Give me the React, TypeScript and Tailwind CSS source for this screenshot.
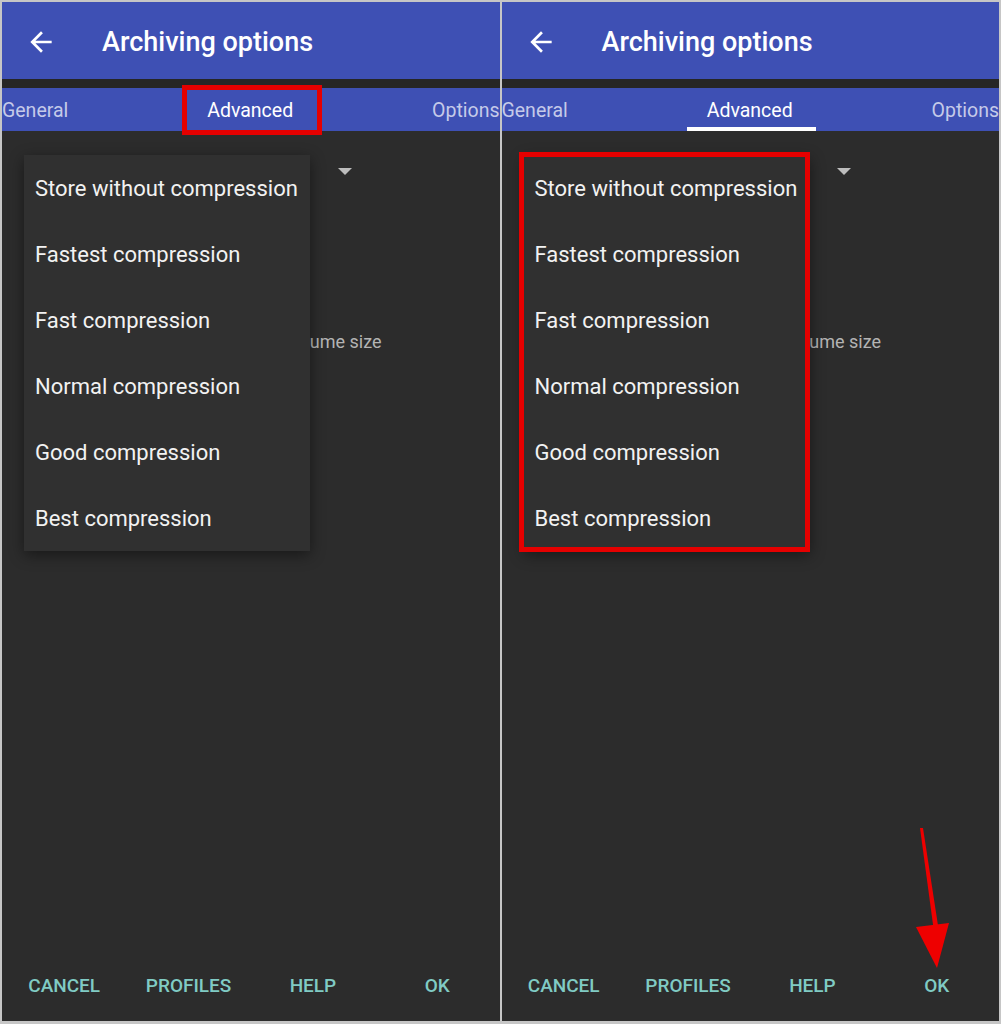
import React from 'react';

const levels = [
  'Store without compression',
  'Fastest compression',
  'Fast compression',
  'Normal compression',
  'Good compression',
  'Best compression',
];

const font = { fontFamily: 'Roboto, "Noto Sans", sans-serif' };

function BackArrow() {
  return (
    <svg width="32" height="32" viewBox="0 0 24 24" fill="#ffffff">
      <path d="M20 11H7.83l5.59-5.59L12 4l-8 8 8 8 1.41-1.41L7.83 13H20v-2z" />
    </svg>
  );
}

function Panel({ marked }: { marked: boolean }) {
  return (
    <div className="relative flex-1 flex flex-col bg-[#2c2c2c] overflow-hidden">
      {/* App bar */}
      <div className="h-[77px] bg-[#3e50b4] flex items-center pt-[3px]">
        <div className="ml-[23px]">
          <BackArrow />
        </div>
        <h1 className="ml-[45px] text-white text-[27px] font-medium">Archiving options</h1>
      </div>
      <div className="h-[9px] bg-[#262626]" />

      {/* Tabs */}
      <div className="h-[43px] bg-[#3e50b4] flex items-center justify-between relative pt-[3px]">
        <span className="text-[19.5px] text-[#c5cae9]">General</span>
        <span className="text-[19.5px] text-white">Advanced</span>
        <span className="text-[19.5px] text-[#c5cae9]">Options</span>
        {marked && <div className="absolute bottom-0 left-[185px] w-[129px] h-[4px] bg-white" />}
      </div>

      {/* Content under the menu */}
      <div className="flex-1 relative">
        <div className="flex justify-end pr-[148px] pt-[37px]">
          <div className="w-0 h-0 border-l-[7px] border-r-[7px] border-t-[7px] border-l-transparent border-r-transparent border-t-[#bdbdbd]" />
        </div>
        <div className="flex justify-end pr-[118px] mt-[153px]">
          <span className="text-[18px] text-[#b4b4b4]">Volume size</span>
        </div>

        {/* Dropdown menu */}
        <div className="absolute left-[22px] top-[24px] w-[286px] bg-[#303030] shadow-[0_4px_14px_rgba(0,0,0,0.45)]">
          {levels.map((l) => (
            <div key={l} className="h-[66px] flex items-center pl-[11px] text-[22px] text-[#f2f2f2] whitespace-nowrap">
              {l}
            </div>
          ))}
        </div>
      </div>

      {/* Bottom buttons */}
      <div className="h-[74px] grid grid-cols-4 items-start">
        {['CANCEL', 'PROFILES', 'HELP', 'OK'].map((b) => (
          <span key={b} className="text-center text-[19px] font-medium text-[#80cbc4] mt-[25px]">
            {b}
          </span>
        ))}
      </div>

      {/* Annotations */}
      {!marked && (
        <div className="absolute left-[180px] top-[83px] w-[140px] h-[50px] border-[5px] border-[#e50000]" />
      )}
      {marked && (
        <>
          <div className="absolute left-[17px] top-[150px] w-[291px] h-[400px] border-[5px] border-[#e50000]" />
          <svg className="absolute left-[400px] top-[820px]" width="60" height="160" viewBox="0 0 60 160">
            <polygon points="18,6 21,6 37,110 32,110" fill="#ee0000" />
            <polygon points="14,105 47,101 35,146" fill="#ee0000" />
          </svg>
        </>
      )}
    </div>
  );
}

export default function App() {
  return (
    <div className="w-[1001px] h-[1024px] bg-[#c6c6c6] pt-[2px] pb-[3px] px-[2px] flex gap-[2px]" style={font}>
      <Panel marked={false} />
      <Panel marked={true} />
    </div>
  );
}
